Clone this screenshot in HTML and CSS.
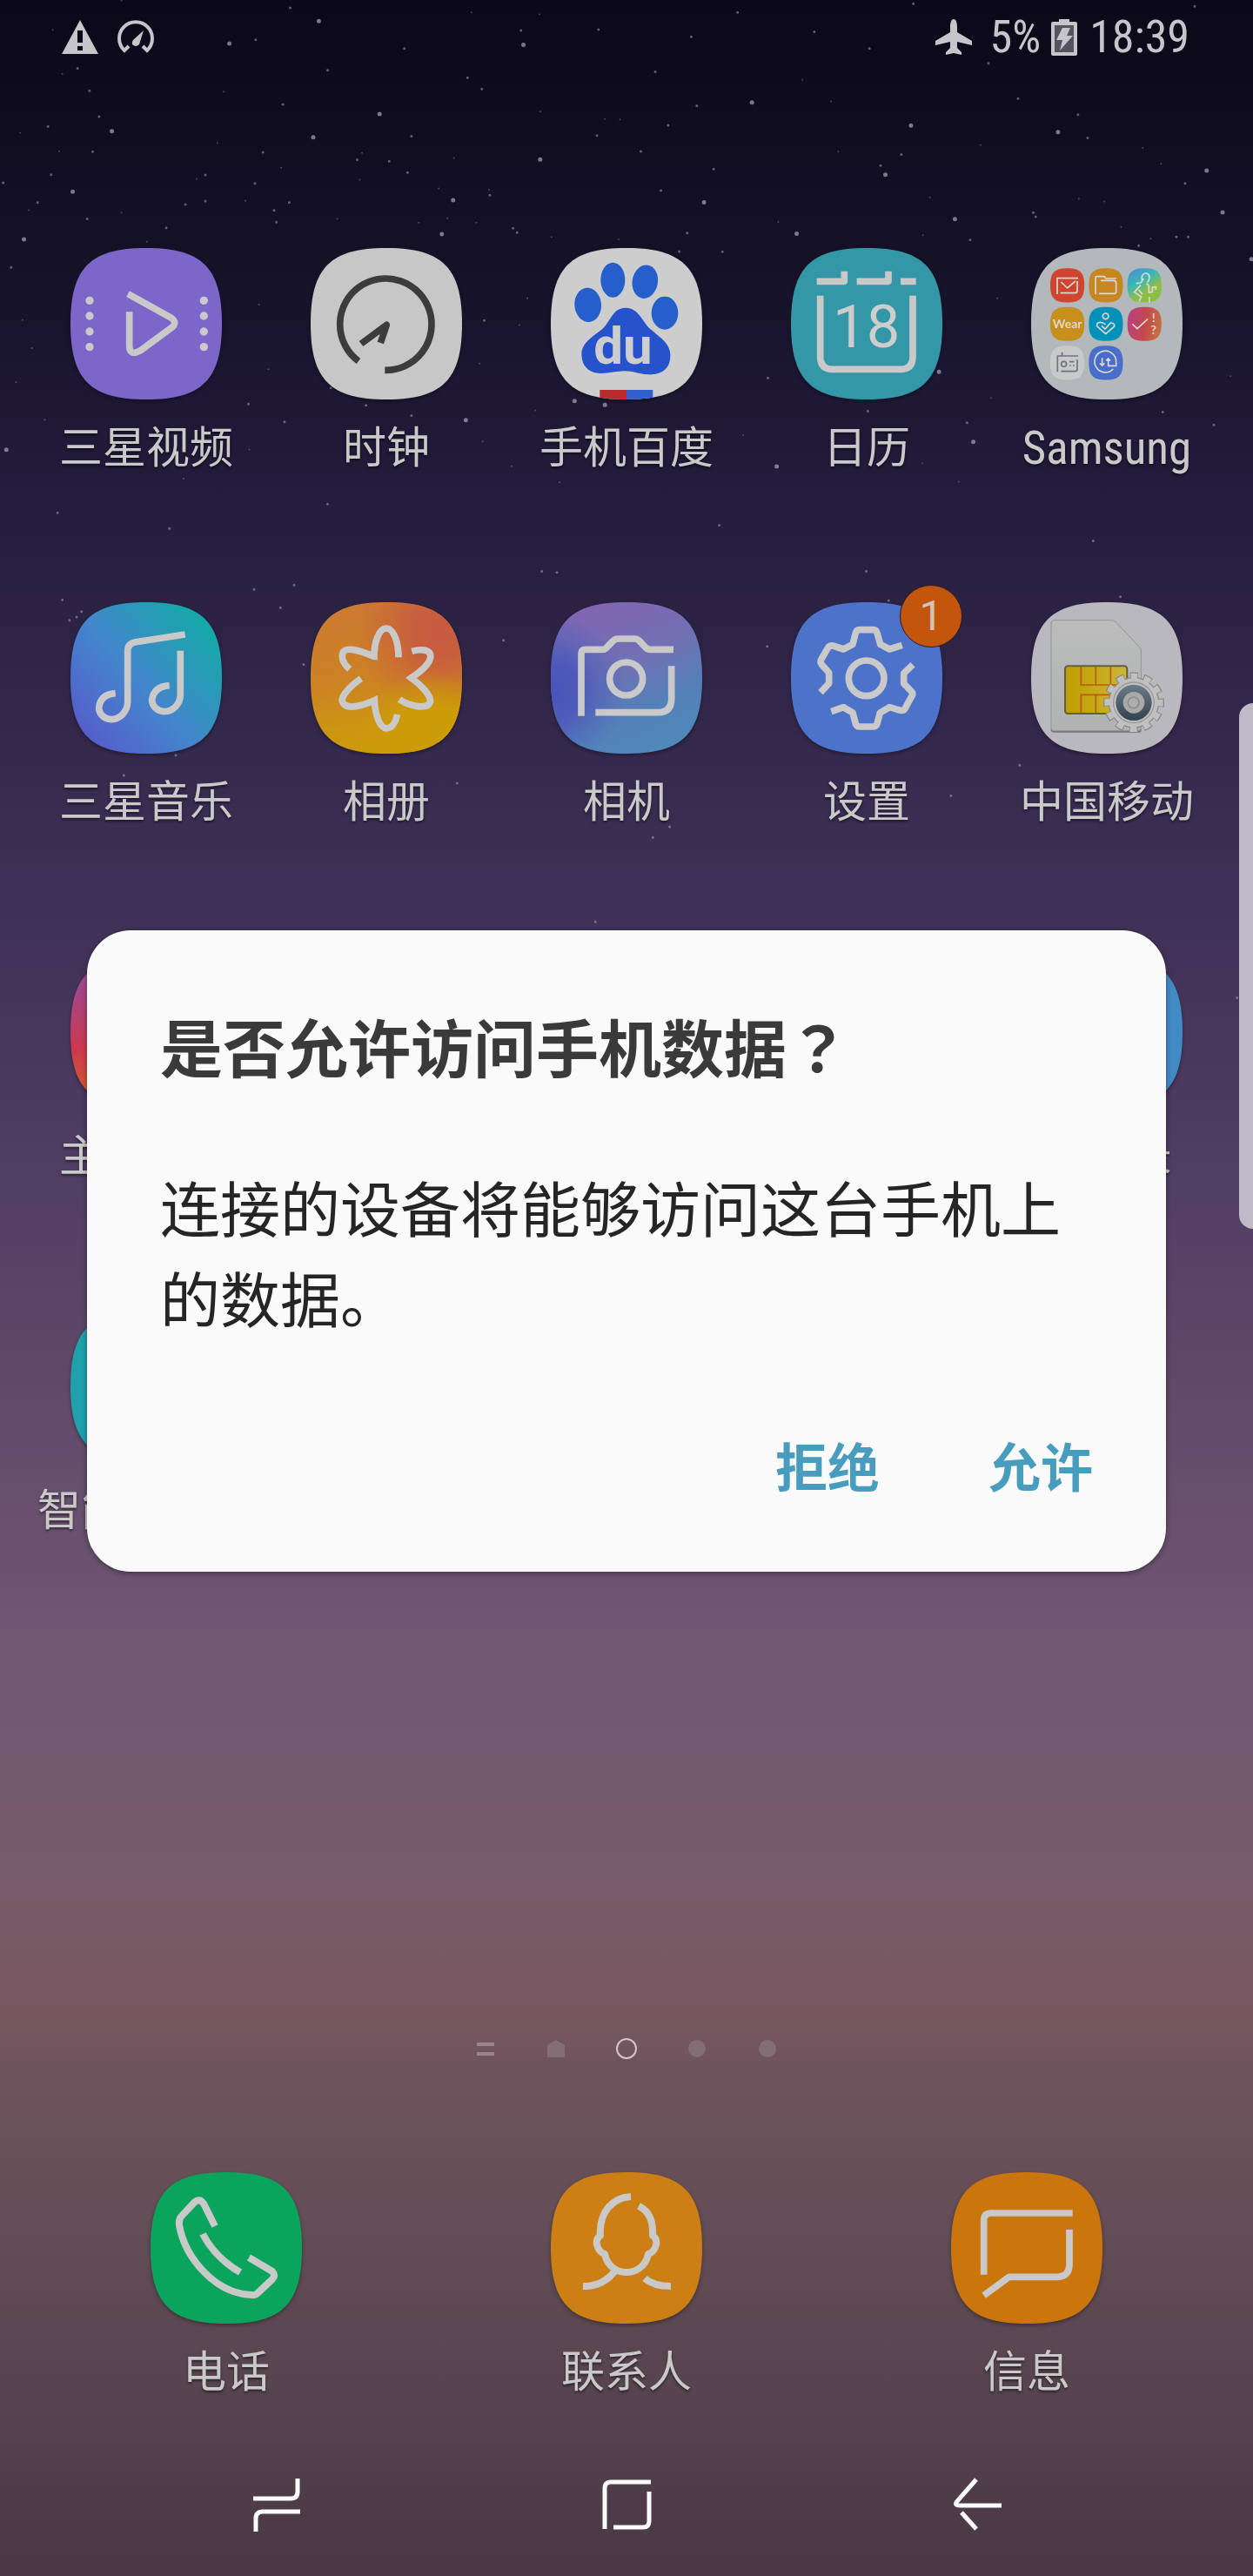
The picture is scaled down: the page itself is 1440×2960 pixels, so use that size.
FILE: index.html
```html
<!DOCTYPE html>
<html lang="zh-CN">
<head>
<meta charset="utf-8">
<meta name="viewport" content="width=device-width, initial-scale=1">
<title>主屏幕</title>
<link rel="stylesheet" href="styles.css">
</head>
<body>
<svg class="defs" aria-hidden="true">
  <defs>
    <path id="tile" d="M0 261C0 68 68 0 261 0S522 68 522 261 454 522 261 522 0 454 0 261Z"/>
    <clipPath id="tile-clip"><use href="#tile"/></clipPath>
    <linearGradient id="g-music" x1="0.1" y1="0.85" x2="0.9" y2="0.15">
      <stop offset="0" stop-color="#5460cb"/><stop offset="0.45" stop-color="#4386cc"/><stop offset="1" stop-color="#16a8a8"/>
    </linearGradient>
    <linearGradient id="g-gallery" x1="0.2" y1="0" x2="0.4" y2="1">
      <stop offset="0" stop-color="#cd7a33"/><stop offset="0.5" stop-color="#cc8224"/><stop offset="0.8" stop-color="#cc9512"/><stop offset="1" stop-color="#cc9b0a"/>
    </linearGradient>
    <radialGradient id="g-gallery-red" cx="0.85" cy="0.2" r="0.55">
      <stop offset="0" stop-color="#c85a40"/><stop offset="0.3" stop-color="#c85a40" stop-opacity="0.9"/><stop offset="1" stop-color="#c85a40" stop-opacity="0"/>
    </radialGradient>
    <radialGradient id="g-gallery-gold" cx="0.8" cy="0.9" r="0.45">
      <stop offset="0" stop-color="#cc9c06"/><stop offset="0.4" stop-color="#cc9c06"/><stop offset="1" stop-color="#cc9c06" stop-opacity="0"/>
    </radialGradient>
    <linearGradient id="g-camera" x1="0.3" y1="0" x2="0.75" y2="1">
      <stop offset="0" stop-color="#8264b3"/><stop offset="0.4" stop-color="#7270b4"/><stop offset="0.7" stop-color="#5480b8"/><stop offset="1" stop-color="#5089ba"/>
    </linearGradient>
    <radialGradient id="g-camera-blue" cx="0" cy="0.58" r="0.5">
      <stop offset="0" stop-color="#4854ba"/><stop offset="0.4" stop-color="#4a58ba" stop-opacity="0.9"/><stop offset="1" stop-color="#4a66ba" stop-opacity="0"/>
    </radialGradient>
    <linearGradient id="g-health" x1="0.2" y1="0" x2="0.8" y2="1">
      <stop offset="0" stop-color="#4a8fd0"/><stop offset="0.35" stop-color="#38b8b8"/><stop offset="0.65" stop-color="#8fbc48"/><stop offset="1" stop-color="#84c238"/>
    </linearGradient>
    <linearGradient id="g-quiz" x1="0" y1="0.5" x2="1" y2="0.7">
      <stop offset="0" stop-color="#bc4080"/><stop offset="0.5" stop-color="#c4484c"/><stop offset="1" stop-color="#c47440"/>
    </linearGradient>
    <linearGradient id="g-theme" x1="0" y1="0" x2="0" y2="1">
      <stop offset="0.2" stop-color="#a0488c"/><stop offset="0.6" stop-color="#cc3850"/><stop offset="0.95" stop-color="#d0602c"/>
    </linearGradient>
    <linearGradient id="g-card" x1="0" y1="0" x2="0" y2="1">
      <stop offset="0" stop-color="#bcbcbc"/><stop offset="1" stop-color="#b0b3b3"/>
    </linearGradient>
    <linearGradient id="g-chip" x1="0" y1="0" x2="1" y2="0">
      <stop offset="0" stop-color="#bd9f00"/><stop offset="1" stop-color="#cdb535"/>
    </linearGradient>
    <linearGradient id="g-gear" x1="0" y1="0" x2="0" y2="1">
      <stop offset="0" stop-color="#6c7a8a"/><stop offset="1" stop-color="#34424f"/>
    </linearGradient>
  </defs>
</svg>

<main class="screen">
  <svg class="stars" viewBox="0 0 1568 1568" preserveAspectRatio="none" aria-hidden="true">
    <path class="star-l" d="M399 68h0M287 140h0M655 144h0M475 367h0M941 330h0M676 513h0M1108 562h0M881 651h0M567 644h0M553 753h0M30 770h0M140 422h0M392 442h0M1140 404h0M91 617h0M1195 705h0M583 1352h0M719 1290h0M757 1303h0M972 1501h0M1218 1422h0M1530 683h0M1175 1196h0M8 1447h0M1566 834h0M1510 549h0M997 752h0M1324 425h0"/>
    <path class="star-m" d="M923 40h0M363 25h0M749 95h0M1019 102h0M1088 156h0M865 118h0M97 220h0M410 226h0M585 250h0M820 231h0M112 292h0M603 286h0M354 336h0M872 340h0M1274 317h0M1349 369h0M124 375h0M60 407h0M515 438h0M747 436h0M836 403h0M1361 444h0M116 488h0M329 490h0M447 514h0M487 519h0M802 487h0M893 544h0M1102 533h0M64 562h0M257 563h0M4 588h0M319 590h0M510 555h0M613 628h0M827 613h0M257 647h0M232 658h0M362 652h0M343 677h0M47 652h0M109 704h0M208 733h0M346 715h0M642 734h0M647 748h0M860 750h0M1293 684h0M1296 697h0M1472 762h0M1487 762h0M1425 790h0M1128 497h0M1237 204h0M1495 20h0M1143 12h0M850 809h0M904 810h0M606 1031h0M1086 1323h0M356 1357h0M515 1337h0M458 1304h0M311 1300h0M961 1216h0M1455 1326h0M1519 1367h0M652 98h0M320 128h0M506 156h0M1483 590h0M1214 772h0M1210 1360h0M414 1248h0M14 860h0"/>
    <path class="star-s" d="M152 2h0M590 40h0M675 46h0M66 96h0M78 237h0M280 295h0M1004 257h0M1040 326h0M676 359h0M757 383h0M776 384h0M25 428h0M272 460h0M74 487h0M453 492h0M568 508h0M1227 467h0M1049 488h0M1430 476h0M1453 527h0M352 540h0M246 576h0M450 578h0M612 611h0M549 606h0M1164 635h0M1350 640h0M1382 648h0M36 676h0M152 684h0M307 646h0M422 704h0M524 716h0M596 716h0M560 702h0M974 714h0M1155 757h0M1403 730h0M1440 768h0M774 770h0M690 762h0M184 778h0M324 980h0M660 960h0M650 1046h0M1248 960h0M28 1030h0M40 1120h0M600 1170h0M336 1188h0M1240 1280h0M670 1320h0M312 1447h0M604 1420h0M640 1500h0M930 1400h0M1154 1490h0M56 1350h0M20 1230h0M1540 1210h0M1200 1550h0M700 1552h0M230 1540h0"/>
    <path class="star-m" d="M318 1896h0M368 1882h0M351 1955h0M102 1968h0M87 1996h0M96 1985h0M678 1838h0M697 1842h0M1084 1838h0M380 2138h0M220 2430h0M155 2495h0M572 2520h0M817 2694h0M960 2080h0M1402 1920h0M838 2660h0M630 2060h0M1276 2462h0M1112 1932h0M780 2320h0M1190 2560h0M830 3030h0M911 3030h0M745 2966h0M1548 3210h0M212 1700h0M410 1622h0M900 1690h0M1368 1740h0M72 1650h0M78 1930h0"/>
  </svg>

  <header class="status">
    <svg class="status-icon" viewBox="0 0 44 44" role="img" aria-label="警告"><path fill="currentColor" fill-rule="evenodd" d="M22 2 43 41H1ZM19 14v14h6V14ZM19 32v5h6v-5Z"/></svg>
    <svg class="status-icon" viewBox="0 0 44 44" role="img" aria-label="速度"><path fill="none" stroke="currentColor" stroke-width="4" d="M14 32 9 37A19 19 0 1 1 35 37L30 32"/><path fill="currentColor" d="M31 14 26 30Q22 34 18 30 17 27 19 25Z"/></svg>
    <span class="spacer"></span>
    <svg class="status-icon" viewBox="0 0 44 44" role="img" aria-label="飞行模式"><path fill="currentColor" d="M22 1C25 1 26 6 26 10V16L43 26V31L26 27V34L31 39V42L22 40 13 42V39L18 34V27L1 31V26L18 16V10C18 6 19 1 22 1Z"/></svg>
    <span class="status-text">5%</span>
    <svg class="status-battery" viewBox="0 0 30 44" role="img" aria-label="正在充电"><path fill="currentColor" d="M9 1H21V4H28Q30 4 30 6V41Q30 43 28 43H2Q0 43 0 41V6Q0 4 2 4H9Z"/><path fill="#55535f" d="M4 8H26V39H4Z"/><path fill="currentColor" d="M13 11H22L18 20H25L10 37 13 25H6Z"/></svg>
    <span class="status-text">18:39</span>
  </header>

  <section class="apps" aria-label="应用">
    <a class="app" href="#">
      <svg class="icon" viewBox="0 0 522 522" aria-hidden="true"><use href="#tile" fill="#7c66c9"/>
        <g transform="translate(-60 -46)"><path class="line" d="M258 204 408 287Q430 304 408 321L302 399Q264 420 263 385V266"/>
        <path class="dots" d="M126 227h0M126 280h0M126 334h0M126 387h0M520 227h0M520 280h0M520 334h0M520 387h0"/></g></svg>
      <span class="label">三星视频</span></a>
    <a class="app" href="#">
      <svg class="icon" viewBox="0 0 522 522" aria-hidden="true"><use href="#tile" fill="#c7c7c7"/>
        <g transform="translate(-888 -46)"><path class="line dark" d="M1053 436A158 158 0 1 1 1144 467M1062 376 1150 311 1129 373"/></g></svg>
      <span class="label">时钟</span></a>
    <a class="app" href="#">
      <svg class="icon" viewBox="0 0 522 522" aria-hidden="true"><use href="#tile" fill="#cdcdcd"/>
        <g clip-path="url(#tile-clip)"><path fill="#b72d2e" d="M169 489h92v33h-92Z"/><path fill="#3060cc" d="M261 489h91v33h-91Z"/></g>
        <g transform="translate(-97 -46)"><g fill="#255fcc"><ellipse cx="311" cy="156" rx="42" ry="60"/><ellipse cx="422" cy="162" rx="44" ry="58" transform="rotate(10 422 162)"/><ellipse cx="225" cy="242" rx="46" ry="59" transform="rotate(-5 225 242)"/><ellipse cx="490" cy="270" rx="46" ry="57"/></g>
        <path fill="#2653cc" d="M355 252C400 252 412 300 440 325 480 360 508 375 509 415 510 465 475 485 430 482 400 480 380 470 352 470 325 470 300 478 270 478 225 478 203 450 203 410 205 370 245 350 275 325 305 297 310 252 355 252Z"/>
        <text class="du" x="346" y="444">du</text></g></svg>
      <span class="label">手机百度</span></a>
    <a class="app" href="#">
      <svg class="icon" viewBox="0 0 522 522" aria-hidden="true"><use href="#tile" fill="#3397a8"/>
        <g transform="translate(-925 -46)"><path class="line" d="M1014 161H1109V126M1152 161H1261V126M1303 161H1356M1026 210V420Q1026 464 1070 464H1301Q1345 464 1345 420V210"/><text class="day" x="1185" y="389">18</text></g></svg>
      <span class="label">日历</span></a>
    <a class="app" href="#">
      <svg class="icon" viewBox="0 0 522 522" aria-hidden="true"><use href="#tile" fill="#b3b8bb"/>
        <g transform="translate(-132 -46)">
          <g transform="translate(198 116) scale(.225)"><use href="#tile" fill="#cf4630"/></g>
          <g transform="translate(331 116) scale(.225)"><use href="#tile" fill="#c58724"/></g>
          <g transform="translate(464 116) scale(.225)"><use href="#tile" fill="url(#g-health)"/></g>
          <g transform="translate(198 249) scale(.225)"><use href="#tile" fill="#c98f1d"/></g>
          <g transform="translate(331 249) scale(.225)"><use href="#tile" fill="#0091b8"/></g>
          <g transform="translate(464 249) scale(.225)"><use href="#tile" fill="url(#g-quiz)"/></g>
          <g transform="translate(198 383) scale(.225)"><use href="#tile" fill="#c9c9c9"/></g>
          <g transform="translate(331 383) scale(.225)"><use href="#tile" fill="#486dcb"/></g>
          <path class="thin" d="M222 205V150H294M291 160V192Q291 201 282 201H233M235 163 257 184 285 160M354 206V148Q354 144 358 144H384L390 151H425M372 158H418Q425 158 425 166V196Q425 203 418 203H366"/>
          <path class="thin" d="M515 158C510 140 522 130 532 134 544 140 541 158 532 164M520 152 510 166 494 168M510 174 488 198 512 214 504 230M503 190 516 206M530 168 538 176V200L550 198V182L562 180V190M540 214V234"/>
          <circle class="thin" cx="389" cy="281" r="10"/>
          <path class="thin" d="M375 314 387 325 406 304Q420 304 419 316L389 342 360 316Q356 302 370 302 380 302 389 310M481 308 498 324 534 291"/>
          <path class="thin ink" d="M223 473V418H294M239 418V405M291 430V464Q291 471 284 471H235M264 438H280M264 451h5m7 0h5"/><circle class="thin ink" cx="245" cy="446" r="9"/>
          <path class="thin" d="M415 463A37 37 0 1 1 425 438V452H398V428M377 425V450M369 443 377 451 385 443M391 434 398 427 405 434"/>
          <text class="mini" x="257" y="321">Wear</text><text class="mini" x="554" y="300">!</text><text class="mini" x="554" y="343">?</text>
        </g></svg>
      <span class="label latin">Samsung</span></a>

    <a class="app" href="#">
      <svg class="icon" viewBox="0 0 522 522" aria-hidden="true"><use href="#tile" fill="url(#g-music)"/>
        <g transform="translate(-60 -97)"><path class="line" d="M455 208 285 234Q257 239 257 265V440A58 61 0 0 1 200 501 44 40 0 0 1 158 462Q162 415 215 411M439 264V415A56 59 0 0 1 383 474 44 40 0 0 1 341 435Q346 388 401 384"/></g></svg>
      <span class="label">三星音乐</span></a>
    <a class="app" href="#">
      <svg class="icon" viewBox="0 0 522 522" aria-hidden="true"><use href="#tile" fill="url(#g-gallery)"/><use href="#tile" fill="url(#g-gallery-red)"/><use href="#tile" fill="url(#g-gallery-gold)"/>
        <g transform="translate(-888 -95)"><path class="line miter" d="M1191 285C1191 235 1175 185 1149 185 1122 185 1107 235 1107 282L1106 282C1060 262 1000 242 997 277 995 295 1010 315 1022 326M1062 358C1030 380 980 425 1002 446 1020 465 1070 450 1108 433 1110 480 1125 528 1149 530 1170 530 1182 505 1187 482M1237 264C1270 255 1305 258 1301 285 1298 310 1265 335 1235 356 1265 378 1305 415 1300 440 1290 465 1230 455 1194 430"/></g></svg>
      <span class="label">相册</span></a>
    <a class="app" href="#">
      <svg class="icon" viewBox="0 0 522 522" aria-hidden="true"><use href="#tile" fill="url(#g-camera)"/><use href="#tile" fill="url(#g-camera-blue)"/>
        <g transform="translate(-97 -127)"><path class="line" d="M202 519V305Q202 290 217 290H275Q283 290 288 285L310 262Q318 253 328 253H385Q395 253 402 260L425 284Q431 290 440 290H520M513 347V460Q513 507 466 507H251"/><circle class="line" cx="357" cy="391" r="57"/></g></svg>
      <span class="label">相机</span></a>
    <a class="app" href="#">
      <svg class="icon" viewBox="0 0 522 522" aria-hidden="true"><use href="#tile" fill="#4d72c9"/>
        <g transform="translate(-925 -127)"><path class="line" d="M1308 275 1265 289 1233 272 1222 233Q1219 222 1208 222H1162Q1151 222 1148 233L1138 272 1106 289 1070 277Q1058 275 1052 285L1030 323Q1024 333 1031 342L1056 370V407L1027 438M1345 342 1314 372V407L1340 434Q1347 442 1342 450L1319 492Q1313 502 1303 500L1265 489 1232 508 1222 546Q1219 556 1208 556H1162Q1151 556 1148 546L1138 508 1106 489 1064 504"/><circle class="line" cx="1185" cy="389" r="61"/></g></svg>
      <span class="badge">1</span>
      <span class="label">设置</span></a>
    <a class="app" href="#">
      <svg class="icon" viewBox="0 0 522 522" aria-hidden="true"><use href="#tile" fill="#b9b8be"/>
        <g transform="translate(-132 -97)"><path fill="#777" d="M200 530V538Q202 546 212 546H504Q512 546 512 538V530Z"/><path fill="url(#g-card)" stroke="#959595" stroke-width="3" d="M212 159H410Q418 159 424 165L506 252Q511 257 511 263V530Q511 540 500 540H212Q201 540 201 529V170Q201 159 212 159Z"/>
        <rect x="249" y="317" width="214" height="164" rx="10" fill="url(#g-chip)" stroke="#625c48" stroke-width="6"/>
        <path fill="none" stroke="#b85c00" stroke-width="5" d="M304 320V382H461M355 320V382M406 320V382M304 478V416H461M355 416V478"/>
        <circle cx="486" cy="443" r="92" fill="none" stroke="#8a8a8a" stroke-width="26" stroke-dasharray="28 20.17" stroke-dashoffset="14" transform="rotate(-90 486 443)"/>
        <circle cx="486" cy="443" r="88" fill="#8a8a8a"/>
        <circle cx="486" cy="443" r="91" fill="none" stroke="#c0c0c0" stroke-width="20" stroke-dasharray="23 24.65" stroke-dashoffset="11" transform="rotate(-90 486 443)"/>
        <circle cx="486" cy="443" r="84" fill="#c0c0c0"/><circle cx="486" cy="443" r="70" fill="none" stroke="#999" stroke-width="4"/>
        <circle cx="486" cy="443" r="62" fill="url(#g-gear)"/><circle cx="486" cy="443" r="37" fill="#a9a9a9"/><circle cx="485" cy="443" r="19" fill="#adadad" stroke="#8b8b8b" stroke-width="5"/></g></svg>
      <span class="label">中国移动</span></a>

    <a class="app" href="#">
      <svg class="icon" viewBox="0 0 522 522" aria-hidden="true"><use href="#tile" fill="url(#g-theme)"/></svg>
      <span class="label">主题商店</span></a>
    <a class="app last-column" href="#">
      <svg class="icon" viewBox="0 0 522 522" aria-hidden="true"><use href="#tile" fill="#428ac4"/></svg>
      <span class="label">备忘录</span></a>

    <a class="app" href="#">
      <svg class="icon" viewBox="0 0 522 522" aria-hidden="true"><use href="#tile" fill="#1fa0ab"/></svg>
      <span class="label">智能管理器</span></a>
  </section>

  <div class="pages" aria-hidden="true">
    <span class="page feed"></span>
    <span class="page home"></span>
    <span class="page current"></span>
    <span class="page"></span>
    <span class="page"></span>
  </div>

  <section class="dock" aria-label="常用应用">
    <a class="app" href="#">
      <svg class="icon" viewBox="0 0 174 174" aria-hidden="true"><g transform="scale(.3333)"><use href="#tile" fill="#0ba45d"/></g>
        <path class="line phone" d="M74 62 61 36Q57 30 51 34L36 50Q32 54 33 61C40 100 76 140 116 141Q120 142 123 139L140 123Q144 119 140 114L113 98M60 71Q74 98 103 115"/></svg>
      <span class="label">电话</span></a>
    <a class="app" href="#">
      <svg class="icon" viewBox="0 0 174 174" aria-hidden="true"><g transform="scale(.3333)"><use href="#tile" fill="#cc7f14"/></g>
        <path class="line phone" d="M92 28C72 29 55 45 57 73 49 77 53 91 62 94 64 104 72 115 87 115 102 115 110 104 112 94 121 91 125 77 117 73 118 55 112 44 101 39M75 112Q60 132 37 131M108 122Q118 131 138 131"/></svg>
      <span class="label">联系人</span></a>
    <a class="app" href="#">
      <svg class="icon" viewBox="0 0 522 522" aria-hidden="true"><use href="#tile" fill="#cb760c"/>
        <g transform="translate(-97 -79)"><path class="line" d="M210 432V245Q210 220 235 220H516M505 277V400Q503 437 466 440H297L210 504"/></g></svg>
      <span class="label">信息</span></a>
  </section>

  <nav class="nav" aria-label="系统导航">
    <button class="nav-button" type="button" aria-label="最近"><svg viewBox="0 0 60 66"><path d="M54 3V18Q54 26 46 26H3M57 41H14Q6 41 6 49V64"/></svg></button>
    <button class="nav-button" type="button" aria-label="主屏幕"><svg viewBox="0 0 60 66"><path d="M58 7H12Q5 7 5 14V61M56 18V52Q56 59 49 59H15"/></svg></button>
    <button class="nav-button" type="button" aria-label="返回"><svg viewBox="0 0 60 66"><path d="M30 4 8 29Q4 34 11 34H59M13 42 30 61"/></svg></button>
  </nav>

  <span class="edge-handle"></span>

  <div class="overlay">
    <div class="dialog" role="dialog" aria-modal="true" aria-labelledby="dialog-title">
      <h1 class="dialog-title" id="dialog-title">是否允许访问手机数据<span class="mark" lang="zh-TW">？</span></h1>
      <p class="dialog-text">连接的设备将能够访问这台手机上的数据。</p>
      <div class="dialog-actions">
        <button class="dialog-button" type="button">拒绝</button>
        <button class="dialog-button" type="button">允许</button>
      </div>
    </div>
  </div>
</main>
</body>
</html>
```

FILE: styles.css
```css
* { box-sizing: border-box; }

body {
  margin: 0;
  font-family: "Roboto Condensed", Roboto, "Noto Sans CJK SC", sans-serif;
  color: #c9c9c9;
}

.defs { position: absolute; width: 0; height: 0; }

.screen {
  position: relative;
  display: flex;
  flex-direction: column;
  min-height: 100vh;
  overflow: hidden;
  background: linear-gradient(#0b0819 0%, #151127 10%, #231c3c 19%, #3a2d52 32%, #403158 36%, #503d63 45%, #624b6b 55%, #6f5672 63%, #735a70 68%, #795c6a 73%, #765760 78%, #6b525a 82%, #5f4a54 89%, #54424d 94%, #483844 100%);
}

.stars {
  position: absolute;
  inset: 0;
  width: 100%;
  aspect-ratio: 1440 / 560;
  overflow: visible;
  pointer-events: none;
}
.stars path { fill: none; stroke: #b4b1bd; stroke-linecap: round; vector-effect: non-scaling-stroke; }
.stars .star-l { stroke-width: 5px; opacity: 0.65; }
.stars .star-m { stroke-width: 3px; opacity: 0.5; }
.stars .star-s { stroke-width: 2px; opacity: 0.35; }

.status {
  position: relative;
  display: flex;
  align-items: center;
  height: 86px;
  padding: 0 73px 0 70px;
  color: #c6c5ca;
}
.status-icon { width: 44px; height: 44px; margin-right: 20px; }
.status-battery { width: 30px; height: 44px; margin: 0 14px 0 12px; }
.status-text { font-size: 52px; line-height: 60px; }
.spacer { flex: 1; }

.apps, .dock {
  position: relative;
  display: grid;
  padding: 0 30px;
}
.apps {
  grid-template-columns: repeat(5, 1fr);
  row-gap: 147px;
  margin-top: 199px;
}
.dock { grid-template-columns: repeat(3, 1fr); margin-bottom: 40px; }

.app {
  position: relative;
  display: flex;
  flex-direction: column;
  align-items: center;
  gap: 26px;
  color: inherit;
  text-decoration: none;
}
.last-column { grid-column: 5; }
.icon { width: 174px; height: 174px; overflow: visible; filter: drop-shadow(0 2px 2px rgba(0, 0, 0, 0.35)); }
.label {
  font-size: 50px;
  line-height: 60px;
  white-space: nowrap;
  text-shadow: 0 2px 3px rgba(0, 0, 0, 0.5);
}
.label.latin { font-size: 53px; }
.badge {
  position: absolute;
  top: -20px;
  left: calc(50% + 38px);
  width: 72px;
  height: 72px;
  border: 1px solid #2c1c26;
  border-radius: 50%;
  background: #c4550c;
  color: #d2c3ba;
  font-family: Roboto, sans-serif;
  font-size: 48px;
  line-height: 70px;
  text-align: center;
}

.line { fill: none; stroke: #c9c9c9; stroke-width: 23px; stroke-linejoin: round; }
.line.dark { stroke: #3c3c3c; }
.line.miter { stroke-linejoin: miter; }
.line.phone { stroke-width: 8px; }
.dots { stroke: #c9c9c9; stroke-width: 28px; stroke-linecap: round; }
.thin { fill: none; stroke: #dcd8d4; stroke-width: 5px; }
.thin.ink { stroke: #6b7380; }
.du { fill: #cdcdcd; font: 700 180px Roboto, sans-serif; text-anchor: middle; }
.day { fill: #cdcdcd; font: 400 206px Roboto, sans-serif; text-anchor: middle; }
.mini { fill: #dcd8d4; font: 700 42px Lato, sans-serif; text-anchor: middle; }

.pages {
  position: relative;
  display: flex;
  justify-content: center;
  align-items: center;
  gap: 61px;
  height: 24px;
  margin: auto 0 130px;
}
.page { width: 20px; height: 20px; border-radius: 50%; background: #846e76; }
.page.feed {
  height: 15px;
  border: solid #98868c;
  border-width: 4px 0;
  border-radius: 0;
  background: none;
}
.page.home { border-radius: 0; clip-path: polygon(50% 0, 100% 30%, 100% 100%, 0 100%, 0 30%); }
.page.current { width: 24px; height: 24px; margin: 0 -2px; border: 2px solid #cfc8cb; background: none; }

.nav {
  position: relative;
  display: flex;
  justify-content: space-between;
  align-items: center;
  height: 164px;
  padding: 0 20%;
}
.nav-button { display: block; padding: 0; border: 0; background: none; }
.nav-button svg { display: block; width: 60px; height: 66px; fill: none; stroke: #fcfcfc; stroke-width: 5px; }

.edge-handle {
  position: absolute;
  top: 808px;
  right: 0;
  width: 16px;
  height: 604px;
  border-radius: 16px 0 0 16px;
  background: #bfbac8;
}

.overlay {
  position: absolute;
  inset: 0;
  display: flex;
  align-items: center;
  padding: 0 100px 86px;
}
.dialog {
  flex: 1;
  padding: 80px 84px 71px;
  border-radius: 50px;
  background: #fafafa;
  box-shadow: 0 2px 6px rgba(0, 0, 0, 0.4);
  font-family: "Noto Sans CJK SC", sans-serif;
}
.dialog-title { margin: 0; color: #3a3a3a; font-size: 72px; font-weight: 700; line-height: 104px; }
.mark { font-family: "Noto Sans CJK TC", "Noto Sans CJK SC", sans-serif; }
.dialog-text { margin: 81px 0 0; color: #252525; font-size: 69px; line-height: 104px; }
.dialog-actions { display: flex; justify-content: flex-end; gap: 125px; margin-top: 89px; }
.dialog-button {
  padding: 0;
  border: 0;
  background: none;
  color: #489dbe;
  font: 700 60px/104px "Noto Sans CJK SC", sans-serif;
}
```
